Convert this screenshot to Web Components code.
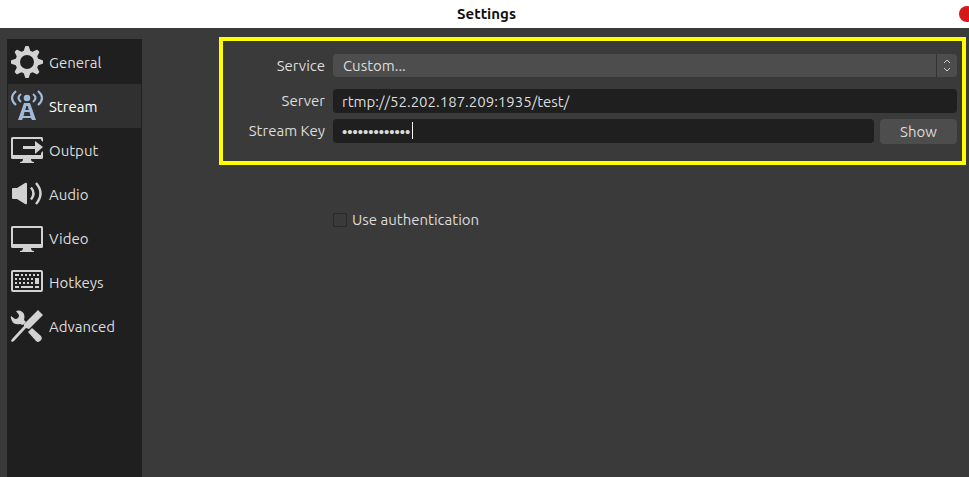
<!DOCTYPE html>
<html lang="en">
<head>
<meta charset="utf-8">
<title>Settings</title>
<style>
html, body { margin: 0; height: 100%; }
body { background: #3a3a3a; color: #dcdcdc; font: 15px/20px Ubuntu, "Noto Sans", sans-serif; overflow: hidden; }
</style>
</head>
<body>
<settings-window>
  <title-bar slot="title">Settings</title-bar>
  <nav-list slot="nav">
    <nav-item icon="gear">General</nav-item>
    <nav-item icon="antenna" selected>Stream</nav-item>
    <nav-item icon="output">Output</nav-item>
    <nav-item icon="speaker">Audio</nav-item>
    <nav-item icon="monitor">Video</nav-item>
    <nav-item icon="keyboard">Hotkeys</nav-item>
    <nav-item icon="tools">Advanced</nav-item>
  </nav-list>
  <stream-form></stream-form>
  <check-field>Use authentication</check-field>
</settings-window>
<script>
const define = (name, html, setup) => {
  const template = document.createElement('template');
  template.innerHTML = html;
  customElements.define(name, class extends HTMLElement {
    constructor() {
      super();
      this.attachShadow({ mode: 'open' }).append(template.content.cloneNode(true));
    }
    connectedCallback() { if (setup) setup(this, this.shadowRoot); }
  });
};

const teeth = Array.from({ length: 8 }, (_, i) =>
  `<path transform="rotate(${i * 45} 16 16)" d="M12 7L14 1Q14 0 15 0H17Q18 0 18 1L20 7Z"/>`).join('');
const keys = (y, xs) => xs.map(x => `<path d="M${x} ${y}h2v2h-2z"/>`).join('');

const icons = {
  gear: `${teeth}<circle cx="16" cy="16" r="9.300" fill="none" stroke="currentColor" stroke-width="4.600"/>`,
  antenna: `<circle cx="16" cy="8" r="3.300"/>
    <g fill="none" stroke="currentColor" stroke-width="2.200">
      <path d="M10 4Q5 8 10 12M22 4Q27 8 22 12"/>
      <path d="M5 1Q-3 8 5 15M27 1Q35 8 27 15"/>
    </g>
    <path fill-rule="evenodd" d="M13 13H19L25 30H21L20 28H12L11 30H7ZM15.300 16L14.300 20H17.700L16.700 16ZM13.500 22L12.500 26H19.500L18.500 22Z"/>`,
  output: `<path fill-rule="evenodd" d="M1.500 3H30.500Q32 3 32 4.500V8L30 6V5H2V21H30V19L32 17V23.500Q32 25 30.500 25H1.500Q0 25 0 23.500V4.500Q0 3 1.500 3Z"/>
    <path d="M12 12H24V7L32 13L24 20V15H12ZM12 25H20Q20 28 23 28V29H9V28Q12 28 12 25Z"/>`,
  speaker: `<path d="M2 10H6L14 5Q16 4 16 6V25Q16 27 14 26L6 21H2Q1 21 1 20V11Q1 10 2 10Z"/>
    <g fill="none" stroke="currentColor" stroke-width="2.400"><path d="M20 9.500Q25 15.500 20 21.500M25 5Q34 15.500 25 26"/></g>`,
  monitor: `<path fill-rule="evenodd" d="M1.500 4H30.500Q32 4 32 5.500V24.500Q32 26 30.500 26H1.500Q0 26 0 24.500V5.500Q0 4 1.500 4ZM2 6V22H30V6Z"/>
    <path d="M12 26H20Q20 29 23 29V30H9V29Q12 29 12 26Z"/>`,
  keyboard: `<rect x="1" y="5" width="30" height="20" rx="1" fill="none" stroke="currentColor" stroke-width="2"/>
    <g shape-rendering="crispEdges"><path d="M4 8h4v2h-4z"/>${keys(8, [10, 14, 18, 22, 26])}
    ${keys(12, [4, 8, 12, 16, 20])}${keys(16, [4, 8, 12, 16, 20])}
    <path d="M24 12h4v6h-4zM4 20h4v2h-4zM10 20h12v2h-12zM24 20h4v2h-4z"/></g>`,
  tools: `<path d="M5 1Q10 -1 13 4Q14 7 13 10L15 12L12 15L9 14Q3 15 1 11Q-1 8 0 6L4 9Q8 9 8 5Z"/>
    <path d="M27 0L32 5L18 19L15 18L3 31L1 32L0 31L1 29L13 16L13 14ZM17 22L21 18L30 26Q32 29 29 31Q27 33 25 31Z"/>`
};

define('settings-window', `
  <style>
    :host { display: flex; flex-direction: column; height: 100vh; }
    .body { display: flex; flex: 1; min-height: 0; padding: 9px 3px 0 7px; gap: 77px; }
    aside { flex: none; display: flex; margin-top: 2px; }
    main { flex: 1; min-width: 0; }
  </style>
  <slot name="title"></slot>
  <div class="body"><aside><slot name="nav"></slot></aside><main><slot></slot></main></div>`);

define('title-bar', `
  <style>
    :host { display: grid; grid-template-columns: 1fr auto 1fr; align-items: center; height: 28px; flex: none;
      background: #fff; color: #111; overflow: hidden; }
    h1 { grid-column: 2; margin: 0; font: 700 15px/28px Ubuntu, "Noto Sans", sans-serif; padding-left: 4px; }
    button { justify-self: end; width: 16px; height: 16px; margin-right: -6px; padding: 0; border: 0; border-radius: 50%; background: #d41919; }
  </style>
  <h1><slot></slot></h1><button aria-label="Close"></button>`);

define('nav-list', `
  <style>
    :host { display: flex; background: #1f1f1f; }
    nav { width: 133px; padding: 1px; }
  </style>
  <nav aria-label="Settings sections"><slot></slot></nav>`);

define('nav-item', `
  <style>
    :host { display: block; }
    button { display: flex; align-items: center; gap: 6px; width: 100%; height: 44px; padding: 0 3px; border: 0;
      background: none; color: inherit; font: inherit; text-align: left; }
    svg { flex: none; width: 32px; height: 32px; color: #d2d2d2; fill: currentColor; overflow: visible; }
    span { padding-top: 2px; }
    :host([selected]) button { background: #303030; color: #fff; }
    :host([selected]) svg { color: #a0bad8; }
  </style>
  <button><svg viewBox="0 0 32 32" aria-hidden="true"></svg><span><slot></slot></span></button>`,
  (host, root) => {
    root.querySelector('svg').innerHTML = icons[host.getAttribute('icon')];
    if (host.hasAttribute('selected')) root.querySelector('button').setAttribute('aria-current', 'page');
  });

define('stream-form', `
  <style>
    :host { display: block; border: 4px solid #ff0; padding: 13px 5px 17px; }
    form { display: grid; grid-template-columns: auto minmax(0, 1fr); column-gap: 8px; row-gap: 6px; }
    label { text-align: right; width: 97px; line-height: 24px; }
    .gap { grid-column: 1 / -1; }
    input, select, button { box-sizing: border-box; width: 100%; min-width: 0; height: 24px; margin: 0; border: 0;
      border-radius: 4px; font: inherit; color: inherit; }
    input { background: #1f1f1f; padding: 0 9px; }
    select { appearance: none; height: 23px; background: #4d4d4d; padding: 0 40px 0 10px; }
    .pick { display: grid; height: 23px; }
    .pick > * { grid-area: 1 / 1; }
    .pick svg { justify-self: end; width: 21px; height: 23px; pointer-events: none; fill: none; }
    .pick-label { line-height: 23px; }
    .row { display: grid; grid-template-columns: 1fr 77px; gap: 6px; }
    .key { position: relative; }
    .caret { position: absolute; left: 79px; top: 3px; width: 1px; height: 17px; background: #fff; }
    input[type=password] { font: 15px/20px "Liberation Sans", sans-serif; display: block; }
    button { height: 25px; background: #4d4d4d; padding: 0; }
  </style>
  <form>
    <label class="pick-label" for="service">Service</label>
    <div class="pick"><select id="service"><option>Custom...</option></select>
      <svg viewBox="0 0 21 23" aria-hidden="true"><path d="M.5 0V23" stroke="#333"/><path d="M8 9L11 6L14 9M8 14L11 17L14 14" stroke="#ccc"/></svg></div>
    <div class="gap"></div>
    <label for="server">Server</label>
    <input id="server" value="rtmp://52.202.187.209:1935/test/">
    <label for="key">Stream Key</label>
    <div class="row"><div class="key"><input id="key" type="password" value="streamkey1234"><span class="caret"></span></div>
      <button type="button">Show</button></div>
  </form>`);

define('check-field', `
  <style>
    :host { display: block; margin: 45px 0 0 114px; }
    label { display: inline-flex; align-items: center; gap: 5px; }
    input { appearance: none; box-sizing: border-box; width: 14px; height: 14px; margin: 0; border: 1px solid #292929; border-radius: 1px; }
  </style>
  <label><input type="checkbox"><slot></slot></label>`);
</script>
</body>
</html>
